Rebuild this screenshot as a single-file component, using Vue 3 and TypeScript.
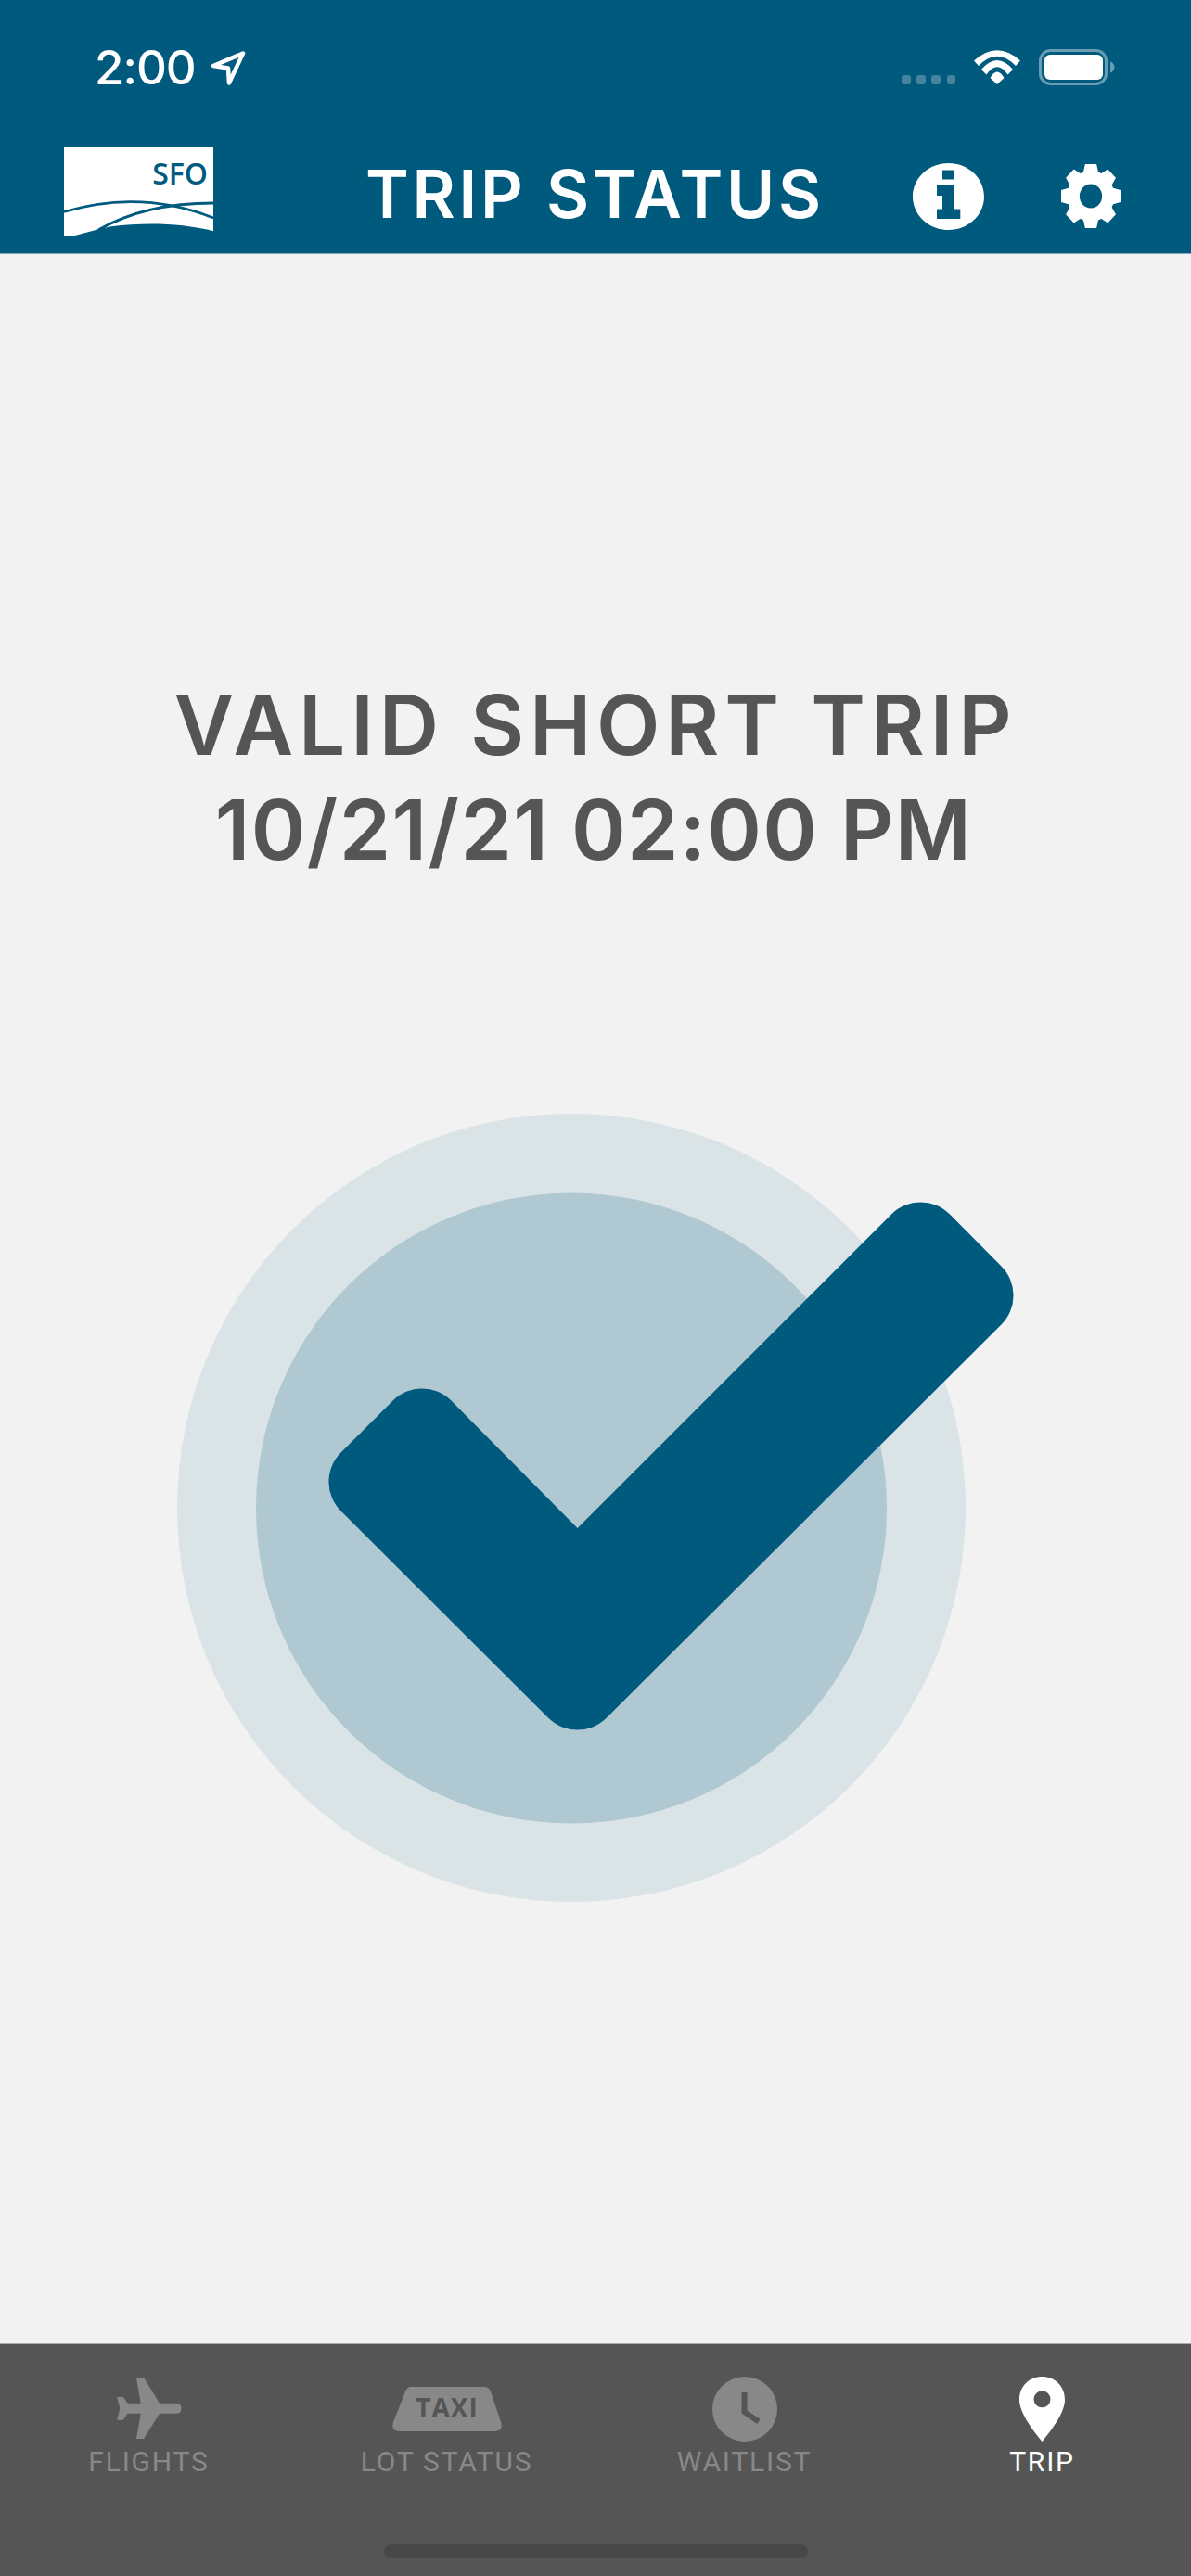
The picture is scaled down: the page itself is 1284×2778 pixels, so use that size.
<template>
  <div class="screen">
    <header class="top">
      <div class="status">
        <div class="status-left">
          <span class="clock-time">2:00</span>
          <svg class="arrow" viewBox="0 0 40 40" width="40" height="40">
            <path d="M35 4.5 3 18 19 20.5 20 36.5Z" fill="none" stroke="#fff" stroke-width="4.5" stroke-linejoin="round" />
          </svg>
        </div>
        <div class="status-right">
          <div class="signal">
            <i v-for="n in 4" :key="n"></i>
          </div>
          <svg class="wifi" viewBox="0 0 50 37" width="50" height="37">
            <path d="M0 11.5Q25-11 50 11.5L45 17Q25-3.6 5 17Z" fill="#fff" />
            <path d="M8 21Q25 1 42 21L36.5 26.5Q25 10 13.5 26.5Z" fill="#fff" />
            <path d="M17.5 30Q25 17 32.5 30L25 37Z" fill="#fff" />
          </svg>
          <svg class="battery" viewBox="0 0 82 39" width="82" height="39">
            <rect x="1.5" y="1.5" width="71" height="36" rx="11" fill="none" stroke="#6a9db4" stroke-width="3" />
            <rect x="6" y="6" width="63" height="27" rx="6" fill="#fff" />
            <path d="M77 13.5C80 14.5 81.5 17 81.5 19.5S80 24.5 77 25.5Z" fill="#6a9db4" />
          </svg>
        </div>
      </div>
      <div class="nav">
        <svg class="logo" viewBox="0 0 161 96" width="161" height="96">
          <rect width="161" height="96" fill="#fff" />
          <path d="M8 96 39 87.7 51 85.3C85 81 125 81 161 90.3V96Z" fill="#005a7e" />
          <path d="M0 69.5C40 58 95 50 161 76" fill="none" stroke="#005a7e" stroke-width="2.8" />
          <path d="M37 89C70 70 110 60 161 60" fill="none" stroke="#005a7e" stroke-width="2.8" />
          <text class="logo-text" x="155" y="40" text-anchor="end">SFO</text>
        </svg>
        <h1 class="title">TRIP STATUS</h1>
        <svg class="info" viewBox="0 0 77 72" width="77" height="72">
          <path fill="#fff" fill-rule="evenodd" d="M38.5 0C59.8 0 77 16.1 77 36S59.8 72 38.5 72 0 55.9 0 36 17.2 0 38.5 0ZM32 7.5V17.5H45V7.5ZM26 24V35H32V49.5H26V60H51.3V49.5H45V24Z" />
        </svg>
        <svg class="gear" viewBox="-33 -33 66 66" width="64" height="69" preserveAspectRatio="none">
          <circle r="19.25" fill="none" stroke="#fff" stroke-width="13.5" />
          <polygon v-for="a in gearAngles" :key="a" points="-8.5,-24 -6.3,-33 6.3,-33 8.5,-24" fill="#fff" :transform="`rotate(${a})`" />
        </svg>
      </div>
    </header>

    <main class="body">
      <div class="message">
        <div class="line-one">VALID SHORT TRIP</div>
        <div class="line-two">10/21/21 02:00 PM</div>
      </div>
      <svg class="badge" viewBox="170 1180 940 900" width="940" height="900">
        <circle cx="616" cy="1626" r="425" fill="#dae4e7" />
        <circle cx="616" cy="1626.5" r="340" fill="#b0c8d2" />
        <path
          d="M622.6 1648 961 1309.5A44.5 44.5 0 0 1 1024 1309.5L1079.5 1365.5A44.5 44.5 0 0 1 1079.5 1428.5L654 1852.5A44.5 44.5 0 0 1 591 1852.5L367.5 1629.5A44.5 44.5 0 0 1 367.5 1566.5L423.5 1510.5A44.5 44.5 0 0 1 486.5 1510.5Z"
          fill="#005a7e"
        />
      </svg>
    </main>

    <footer class="tabs">
      <div class="tab-row">
        <div class="tab">
          <div class="tab-icon">
            <svg class="plane" viewBox="0 0 70 66" width="70" height="66">
              <path d="M21 0H29L46 27.7H64Q69.5 27.7 69.5 33.2T64 38.7H46L29 66H21L25.7 38.7H11.7L6.7 45.7H0L3.3 33.2 0 21H6.7L11.7 27.7H25.7Z" fill="#888" />
            </svg>
          </div>
          <span class="tab-label">FLIGHTS</span>
        </div>
        <div class="tab">
          <div class="tab-icon">
            <svg viewBox="0 0 118 48" width="118" height="48">
              <path d="M20 0H99Q104 0 106 5L117 38Q120 48 110 48H8Q-2 48 1 38L14 5Q16 0 20 0Z" fill="#888" />
              <text class="taxi-text" x="59" y="33.3" text-anchor="middle">TAXI</text>
            </svg>
          </div>
          <span class="tab-label">LOT STATUS</span>
        </div>
        <div class="tab">
          <div class="tab-icon">
            <svg viewBox="0 0 70 70" width="70" height="70">
              <circle cx="35" cy="35" r="35" fill="#888" />
              <path d="M34.5 17V38L50 48.5" fill="none" stroke="#555" stroke-width="6" />
            </svg>
          </div>
          <span class="tab-label">WAITLIST</span>
        </div>
        <div class="tab active">
          <div class="tab-icon">
            <svg viewBox="0 0 49 70" width="49" height="70">
              <path fill="#fff" fill-rule="evenodd" d="M24.5 0C38 0 49 10 49 25 49 38 36 56 24.5 70 13 56 0 38 0 25 0 10 11 0 24.5 0ZM24.5 15.3A9 9 0 1 0 24.5 33.3 9 9 0 1 0 24.5 15.3Z" />
            </svg>
          </div>
          <span class="tab-label">TRIP</span>
        </div>
      </div>
      <div class="home-bar"></div>
    </footer>
  </div>
</template>

<script setup lang="ts">
const gearAngles: number[] = [0, 45, 90, 135, 180, 225, 270, 315]
</script>

<style>
html,
body {
  margin: 0;
  background: #f2f2f2;
}
</style>

<style scoped>
.screen {
  width: 1284px;
  height: 2778px;
  display: flex;
  flex-direction: column;
  background: #f2f2f2;
  overflow: hidden;
}

.top {
  height: 274px;
  box-sizing: border-box;
  background: #005a7e;
  border-bottom: 1px solid #7fa9bc;
  color: #fff;
}

.status {
  height: 159px;
  box-sizing: border-box;
  padding: 53px 82px 0 102px;
  display: flex;
  justify-content: space-between;
  align-items: flex-start;
}

.status-left {
  display: flex;
  align-items: flex-start;
  gap: 16px;
}

.clock-time {
  font-family: Inter, sans-serif;
  font-weight: 500;
  font-size: 51px;
  line-height: 40px;
  letter-spacing: -1px;
}

.status-right {
  display: flex;
  align-items: flex-end;
}

.signal {
  display: flex;
  gap: 6.6px;
  margin-right: 20px;
  margin-bottom: 1px;
}

.signal i {
  display: block;
  width: 9.5px;
  height: 10px;
  border-radius: 3px;
  background: #45839e;
}

.wifi {
  margin-right: 20px;
  margin-bottom: 1px;
}

.nav {
  display: flex;
  align-items: flex-start;
  padding-left: 69px;
}

.logo {
  flex: none;
}

.logo-text {
  font-family: 'Open Sans', sans-serif;
  font-weight: 600;
  font-size: 32px;
  fill: #005a7e;
}

.title {
  margin: 0 0 0 164px;
  width: 492px;
  font-family: Inter, sans-serif;
  font-weight: 600;
  font-size: 71px;
  line-height: 100px;
  letter-spacing: 3.7px;
  white-space: nowrap;
}

.info {
  margin: 17px 0 0 98px;
  flex: none;
}

.gear {
  margin: 18px 0 0 83px;
  flex: none;
}

.body {
  flex: 1;
  padding-top: 451px;
}

.message {
  font-family: Inter, sans-serif;
  font-weight: 600;
  font-size: 89px;
  line-height: 113px;
  color: #555;
  text-align: center;
  width: 1280px;
  white-space: nowrap;
}

.line-one {
  letter-spacing: 5.85px;
  margin-left: 4px;
}

.line-two {
  letter-spacing: 1.3px;
}

.badge {
  display: block;
  margin: 229px 0 0 170px;
}

.tabs {
  height: 251px;
  box-sizing: border-box;
  background: #555;
  border-top: 1px solid #aaa;
  display: flex;
  flex-direction: column;
}

.tab-row {
  display: grid;
  grid-template-columns: repeat(4, 1fr);
  padding-top: 35px;
}

.tab {
  display: flex;
  flex-direction: column;
  align-items: center;
  color: #888;
}

.tab.active {
  color: #fff;
}

.tab-icon {
  height: 70px;
  display: flex;
  align-items: center;
  justify-content: center;
}

.plane {
  margin-bottom: 3px;
}

.tab-label {
  margin-top: 4px;
  font-family: Roboto, sans-serif;
  font-size: 30px;
  line-height: 36px;
  letter-spacing: 1.8px;
}

.taxi-text {
  font-family: 'Open Sans', sans-serif;
  font-weight: 700;
  font-size: 28px;
  letter-spacing: 1px;
  fill: #555;
}

.home-bar {
  align-self: center;
  width: 457px;
  height: 15px;
  margin-top: 71px;
  border-radius: 8px;
  background: #484848;
}
</style>
